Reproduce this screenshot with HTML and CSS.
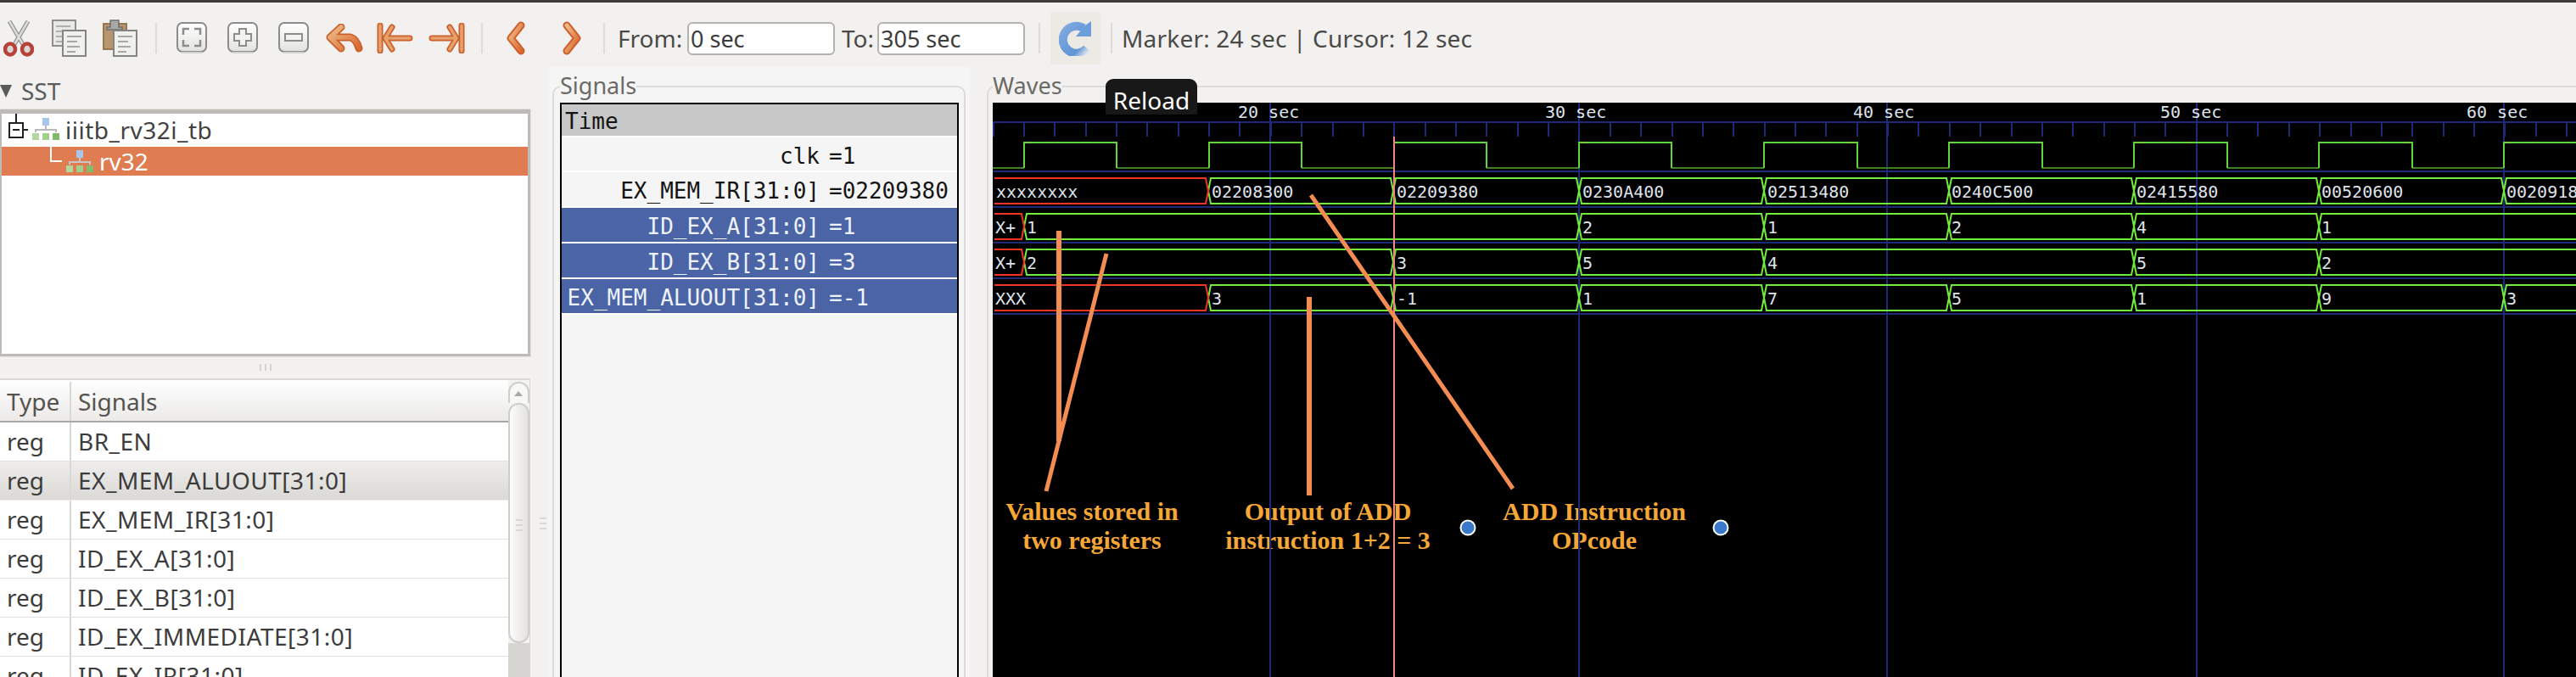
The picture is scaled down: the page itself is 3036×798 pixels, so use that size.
FILE: index.html
```html
<!DOCTYPE html>
<html lang="en">
<head>
<meta charset="utf-8">
<title>GTKWave</title>
<link rel="stylesheet" href="styles.css">
</head>
<body>
<svg class="defs" width="0" height="0" aria-hidden="true">
  <defs>
    <linearGradient id="orange" x1="0" y1="0" x2="1" y2="1">
      <stop offset="0" stop-color="#f0bd8c"/><stop offset="1" stop-color="#d9682e"/>
    </linearGradient>
    <linearGradient id="btn" x1="0" y1="0" x2="0" y2="1">
      <stop offset="0" stop-color="#ffffff"/><stop offset="1" stop-color="#e2e2e0"/>
    </linearGradient>
    <linearGradient id="blueFade" x1="0" y1="0" x2="1" y2="1">
      <stop offset="0" stop-color="#7fa9de"/><stop offset="0.75" stop-color="#5f94d6"/><stop offset="1" stop-color="#dfe6ee"/>
    </linearGradient>
  </defs>
</svg>
<div class="topbar"></div>
<header class="toolbar">
  <div class="tool">
    <svg width="36" height="44" viewBox="0 0 36 44">
      <path d="M7 2L24 31M29 2L12 31" fill="none" stroke="#8f8f8d" stroke-width="5"/>
      <path d="M7 2L24 31M29 2L12 31" fill="none" stroke="#dcdcda" stroke-width="2.5"/>
      <ellipse cx="8" cy="35" rx="6" ry="6.5" fill="#d9d7d3" stroke="#b8423a" stroke-width="4.5"/>
      <ellipse cx="28" cy="35" rx="6" ry="6.5" fill="#d9d7d3" stroke="#b8423a" stroke-width="4.5"/>
    </svg>
  </div>
  <div class="tool">
    <svg width="42" height="44" viewBox="0 0 42 44">
      <rect x="1" y="1" width="27" height="30" fill="#e8e8e6" stroke="#8f8f8d" stroke-width="2"/>
      <path d="M5 8H22M5 14H18M5 20H20M5 26H16" stroke="#b0b0ae" stroke-width="2"/>
      <rect x="13" y="13" width="27" height="30" fill="#f0f0ee" stroke="#858583" stroke-width="2"/>
      <path d="M18 20H35M18 26H30M18 32H33M18 38H28" stroke="#a8a8a6" stroke-width="2"/>
    </svg>
  </div>
  <div class="tool">
    <svg width="42" height="44" viewBox="0 0 42 44">
      <rect x="1" y="5" width="27" height="30" fill="#b7966d" stroke="#94784f" stroke-width="2"/>
      <path d="M9 9V1H19V9H23V12H5V9Z" fill="#a8a8a6" stroke="#6e6e6c" stroke-width="1.5"/>
      <rect x="13" y="13" width="27" height="30" fill="#f0f0ee" stroke="#858583" stroke-width="2"/>
      <path d="M18 20H35M18 26H30M18 32H33M18 38H28" stroke="#a8a8a6" stroke-width="2"/>
    </svg>
  </div>
  <span class="sep sep-first"></span>
  <div class="tool">
    <svg width="36" height="38" viewBox="0 0 36 38">
      <rect x="1" y="1" width="34" height="34" rx="6" fill="url(#btn)" stroke="#8c8c8a" stroke-width="2"/>
      <path d="M6 36H30" stroke="#d2d1cf" stroke-width="2"/>
      <path d="M8 15V8H15M21 8H28V15M8 21V28H15M21 28H28V21" fill="none" stroke="#8c8c8a" stroke-width="2.5"/>
    </svg>
  </div>
  <div class="tool">
    <svg width="36" height="38" viewBox="0 0 36 38">
      <rect x="1" y="1" width="34" height="34" rx="6" fill="url(#btn)" stroke="#8c8c8a" stroke-width="2"/>
      <path d="M6 36H30" stroke="#d2d1cf" stroke-width="2"/>
      <path d="M14 8H22V14H28V22H22V28H14V22H8V14H14Z" fill="#f2f2f0" stroke="#8c8c8a" stroke-width="2"/>
    </svg>
  </div>
  <div class="tool">
    <svg width="36" height="38" viewBox="0 0 36 38">
      <rect x="1" y="1" width="34" height="34" rx="6" fill="url(#btn)" stroke="#8c8c8a" stroke-width="2"/>
      <path d="M6 36H30" stroke="#d2d1cf" stroke-width="2"/>
      <rect x="8" y="14" width="20" height="8" fill="#f2f2f0" stroke="#8c8c8a" stroke-width="2"/>
    </svg>
  </div>
  <div class="tool">
    <svg width="44" height="34" viewBox="0 0 44 34">
      <g fill="none" stroke-linecap="round" stroke-linejoin="round">
        <path d="M18 4L5 16L18 29M5 16H29Q36 18 39 29" stroke="#c9602c" stroke-width="9"/>
        <path d="M18 4L5 16L18 29M5 16H29Q36 18 39 29" stroke="url(#orange)" stroke-width="5.5"/>
      </g>
    </svg>
  </div>
  <div class="tool">
    <svg width="44" height="36" viewBox="0 0 44 36">
      <g fill="none" stroke-linecap="round" stroke-linejoin="round">
        <path d="M4 3V33M18 5L10 18L18 31M10 18H39" stroke="#c9602c" stroke-width="7"/>
        <path d="M4 3V33M18 5L10 18L18 31M10 18H39" stroke="#e8a06a" stroke-width="3.5"/>
      </g>
    </svg>
  </div>
  <div class="tool">
    <svg width="44" height="36" viewBox="0 0 44 36">
      <g fill="none" stroke-linecap="round" stroke-linejoin="round">
        <path d="M40 3V33M26 5L34 18L26 31M34 18H5" stroke="#c9602c" stroke-width="7"/>
        <path d="M40 3V33M26 5L34 18L26 31M34 18H5" stroke="#e8a06a" stroke-width="3.5"/>
      </g>
    </svg>
  </div>
  <span class="sep sep-mid"></span>
  <div class="tool">
    <svg width="24" height="40" viewBox="0 0 24 40">
      <g fill="none" stroke-linecap="round" stroke-linejoin="round">
        <path d="M18 5L6 20L18 35" stroke="#cf5f28" stroke-width="9"/>
        <path d="M18 5L6 20L18 35" stroke="url(#orange)" stroke-width="5"/>
      </g>
    </svg>
  </div>
  <div class="tool tool-next">
    <svg width="24" height="40" viewBox="0 0 24 40">
      <g fill="none" stroke-linecap="round" stroke-linejoin="round">
        <path d="M6 5L18 20L6 35" stroke="#cf5f28" stroke-width="9"/>
        <path d="M6 5L18 20L6 35" stroke="url(#orange)" stroke-width="5"/>
      </g>
    </svg>
  </div>
  <span class="sep sep-range"></span>
  <label class="range-label from-label">From:</label>
  <input class="range-input" type="text" value="0 sec">
  <label class="range-label to-label">To:</label>
  <input class="range-input" type="text" value="305 sec">
  <span class="sep sep-reload"></span>
  <div class="reload-btn">
    <svg width="40" height="42" viewBox="0 0 40 42">
      <path d="M29 9A16 16 0 1 0 33 33" fill="none" stroke="url(#blueFade)" stroke-width="10"/>
      <path d="M38 1V19H20L25 13L31 6Z" fill="#6c9edb"/>
    </svg>
  </div>
  <span class="sep sep-marker"></span>
  <span class="marker-text">Marker: 24 sec | Cursor: 12 sec</span>
</header>

<main class="main">
  <section class="left">
    <div class="left-pane">
      <div class="sst-head"><span class="sst-arrow"></span><span class="sst-title">SST</span></div>
      <div class="tree">
        <div class="tree-row tree-root">
          <svg class="expander" width="24" height="32" viewBox="0 0 24 32">
            <path d="M9 0V11M17 19H23" stroke="#222" stroke-width="2" fill="none"/>
            <rect x="1" y="11" width="16" height="17" fill="#fff" stroke="#222" stroke-width="2"/>
            <path d="M5 19H13" stroke="#222" stroke-width="2"/>
          </svg>
          <svg class="hier" width="32" height="26" viewBox="0 0 32 26">
            <rect x="12" y="0" width="8" height="9" fill="#a8c6ea"/>
            <path d="M16 9V13M4 17V14H28V17" fill="none" stroke="#b8b8b6" stroke-width="2"/>
            <rect x="0" y="18" width="8" height="8" fill="#b2d89e"/>
            <rect x="12" y="18" width="8" height="8" fill="#a3cf8c"/>
            <rect x="24" y="18" width="8" height="8" fill="#82bb6a"/>
          </svg>
          <span class="tree-label">iiitb_rv32i_tb</span>
        </div>
        <div class="tree-row tree-sel">
          <svg class="connector" width="14" height="18" viewBox="0 0 14 18">
            <path d="M1 0V17H14" fill="none" stroke="#fff" stroke-width="2"/>
          </svg>
          <svg class="hier" width="32" height="26" viewBox="0 0 32 26">
            <rect x="12" y="0" width="8" height="9" fill="#a8c6ea"/>
            <path d="M16 9V13M4 17V14H28V17" fill="none" stroke="#c8c8c6" stroke-width="2"/>
            <rect x="0" y="18" width="8" height="8" fill="#b2d89e"/>
            <rect x="12" y="18" width="8" height="8" fill="#a3cf8c"/>
            <rect x="24" y="18" width="8" height="8" fill="#82bb6a"/>
          </svg>
          <span class="tree-label">rv32</span>
        </div>
      </div>
      <div class="hsplit"><span class="hgrip"></span><span class="hgrip"></span><span class="hgrip"></span></div>
      <div class="siglist">
        <div class="siglist-body">
          <div class="sl-head"><span class="sl-type">Type</span><span class="sl-name">Signals</span></div>
          <div class="sl-row"><span class="sl-type">reg</span><span class="sl-name">BR_EN</span></div>
          <div class="sl-row sl-sel"><span class="sl-type">reg</span><span class="sl-name">EX_MEM_ALUOUT[31:0]</span></div>
          <div class="sl-row"><span class="sl-type">reg</span><span class="sl-name">EX_MEM_IR[31:0]</span></div>
          <div class="sl-row"><span class="sl-type">reg</span><span class="sl-name">ID_EX_A[31:0]</span></div>
          <div class="sl-row"><span class="sl-type">reg</span><span class="sl-name">ID_EX_B[31:0]</span></div>
          <div class="sl-row"><span class="sl-type">reg</span><span class="sl-name">ID_EX_IMMEDIATE[31:0]</span></div>
          <div class="sl-row"><span class="sl-type">reg</span><span class="sl-name">ID_EX_IR[31:0]</span></div>
        </div>
        <div class="scrollbar">
          <div class="sb-up"></div>
          <div class="sb-thumb"><span class="grip-h"></span><span class="grip-h"></span><span class="grip-h"></span></div>
          <div class="sb-trough"></div>
        </div>
      </div>
    </div>
    <div class="vsplit"><span class="grip-h"></span><span class="grip-h"></span><span class="grip-h"></span></div>
  </section>

  <section class="signals-panel">
    <fieldset class="frame signals-frame">
      <legend class="frame-title">Signals</legend>
      <div class="sigbox">
        <div class="sig-row sig-time"><span class="time-label">Time</span></div>
        <div class="sig-row sig-short"><span class="sig-name">clk</span><span class="sig-val">=1</span></div>
        <div class="sig-row"><span class="sig-name">EX_MEM_IR[31:0]</span><span class="sig-val">=02209380</span></div>
        <div class="sig-row sig-sel"><span class="sig-name">ID_EX_A[31:0]</span><span class="sig-val">=1</span></div>
        <div class="sig-row sig-sel"><span class="sig-name">ID_EX_B[31:0]</span><span class="sig-val">=3</span></div>
        <div class="sig-row sig-sel"><span class="sig-name">EX_MEM_ALUOUT[31:0]</span><span class="sig-val">=-1</span></div>
      </div>
    </fieldset>
  </section>

  <section class="waves-panel">
    <fieldset class="frame waves-frame">
      <legend class="frame-title">Waves</legend>
      <svg class="wave-canvas" width="1866" height="677" viewBox="1170 121 1866 677">
        <defs>
          <path id="s1424" d="M1424 225L1427 210H1639L1642 225L1639 240H1427Z"/>
          <path id="s1642" d="M1642 225L1645 210H1858L1861 225L1858 240H1645Z"/>
          <path id="s1861" d="M1861 225L1864 210H2076L2079 225L2076 240H1864Z"/>
          <path id="s2079" d="M2079 225L2082 210H2294L2297 225L2294 240H2082Z"/>
          <path id="s2297" d="M2297 225L2300 210H2512L2515 225L2512 240H2300Z"/>
          <path id="s2515" d="M2515 225L2518 210H2730L2733 225L2730 240H2518Z"/>
          <path id="s2733" d="M2733 225L2736 210H2948L2951 225L2948 240H2736Z"/>
          <path id="e2733" d="M2733 225L2736 210H3040M2733 225L2736 240H3040"/>
          <path id="e2951" d="M2951 225L2954 210H3040M2951 225L2954 240H3040"/>
          <path id="l1207a" d="M1207 225L1210 210H1858L1861 225L1858 240H1210Z"/>
          <path id="l1207b" d="M1207 225L1210 210H1639L1642 225L1639 240H1210Z"/>
          <path id="l2079" d="M2079 225L2082 210H2512L2515 225L2512 240H2082Z"/>
          <path id="r1424" d="M1172 210H1421L1424 225L1421 240H1172"/>
          <path id="r1207" d="M1172 210H1204L1207 225L1204 240H1172"/>
        </defs>

        <g class="note-text">
          <text x="1287" y="613">Values stored in</text>
          <text x="1287" y="647">two registers</text>
          <text x="1565" y="613">Output of ADD</text>
          <text x="1565" y="647">instruction 1+2 = 3</text>
          <text x="1879" y="613">ADD Instruction</text>
          <text x="1879" y="647">OPcode</text>
        </g>

        <g class="grid">
          <path d="M1170 144H3036M1170 202H3036M1170 244H3036M1170 286H3036M1170 328H3036M1170 370H3036"/>
          <path d="M1497 121V798M1861 121V798M2224 121V798M2589 121V798M2951 121V798"/>
          <path d="M1171 144V161M1207 144V161M1243 144V161M1280 144V161M1316 144V161M1352 144V161M1389 144V161M1425 144V161M1461 144V161M1498 144V161M1534 144V161M1571 144V161M1607 144V161M1643 144V161M1680 144V161M1716 144V161M1752 144V161M1789 144V161M1825 144V161M1861 144V161M1898 144V161M1934 144V161M1971 144V161M2007 144V161M2043 144V161M2080 144V161M2116 144V161M2152 144V161M2189 144V161M2225 144V161M2261 144V161M2298 144V161M2334 144V161M2371 144V161M2407 144V161M2443 144V161M2480 144V161M2516 144V161M2552 144V161M2589 144V161M2625 144V161M2661 144V161M2698 144V161M2734 144V161M2771 144V161M2807 144V161M2843 144V161M2880 144V161M2916 144V161M2952 144V161M2989 144V161M3025 144V161"/>
        </g>

        <g class="wave-text">
          <text x="1459" y="139">20 sec</text>
          <text x="1821" y="139">30 sec</text>
          <text x="2184" y="139">40 sec</text>
          <text x="2546" y="139">50 sec</text>
          <text x="2907" y="139">60 sec</text>
        </g>

        <path class="clk-low" d="M1170 198H1207M1316 198H1425M1534 198H1643M1752 198H1861M1970 198H2079M2189 198H2297M2407 198H2515M2625 198H2733M2843 198H2951"/>
        <path class="clk-high" d="M1207 198V168H1316V198M1425 198V168H1534V198M1643 198V168H1752V198M1861 198V168H1970V198M2079 198V168H2189V198M2297 198V168H2407V198M2515 198V168H2625V198M2733 198V168H2843V198M2951 198V168H3040"/>

        <g class="bus">
          <use href="#s1424"/><use href="#s1642"/><use href="#s1861"/><use href="#s2079"/><use href="#s2297"/><use href="#s2515"/><use href="#s2733"/><use href="#e2951"/>
        </g>
        <use class="bus-x" href="#r1424"/>
        <g class="bus row-a">
          <use href="#l1207a"/><use href="#s1861"/><use href="#s2079"/><use href="#s2297"/><use href="#s2515"/><use href="#e2733"/>
        </g>
        <use class="bus-x row-a" href="#r1207"/>
        <g class="bus row-b">
          <use href="#l1207b"/><use href="#s1642"/><use href="#s1861"/><use href="#l2079"/><use href="#s2515"/><use href="#e2733"/>
        </g>
        <use class="bus-x row-b" href="#r1207"/>
        <g class="bus row-c">
          <use href="#s1424"/><use href="#s1642"/><use href="#s1861"/><use href="#s2079"/><use href="#s2297"/><use href="#s2515"/><use href="#s2733"/><use href="#e2951"/>
        </g>
        <use class="bus-x row-c" href="#r1424"/>

        <g class="wave-text">
          <text x="1174" y="233">xxxxxxxx</text>
          <text x="1428" y="233">02208300</text>
          <text x="1646" y="233">02209380</text>
          <text x="1865" y="233">0230A400</text>
          <text x="2083" y="233">02513480</text>
          <text x="2300" y="233">0240C500</text>
          <text x="2518" y="233">02415580</text>
          <text x="2736" y="233">00520600</text>
          <text x="2954" y="233">00209180</text>

          <text x="1173" y="275">X+</text>
          <text x="1210" y="275">1</text>
          <text x="1865" y="275">2</text>
          <text x="2083" y="275">1</text>
          <text x="2300" y="275">2</text>
          <text x="2518" y="275">4</text>
          <text x="2736" y="275">1</text>

          <text x="1173" y="317">X+</text>
          <text x="1210" y="317">2</text>
          <text x="1646" y="317">3</text>
          <text x="1865" y="317">5</text>
          <text x="2083" y="317">4</text>
          <text x="2518" y="317">5</text>
          <text x="2736" y="317">2</text>

          <text x="1173" y="359">XXX</text>
          <text x="1428" y="359">3</text>
          <text x="1646" y="359">-1</text>
          <text x="1865" y="359">1</text>
          <text x="2083" y="359">7</text>
          <text x="2300" y="359">5</text>
          <text x="2518" y="359">1</text>
          <text x="2736" y="359">9</text>
          <text x="2954" y="359">3</text>
        </g>

        <path class="cursor" d="M1643 161V798"/>

        <g class="arrows">
          <path d="M1248 272V520"/>
          <path class="thin" d="M1304 299L1233 579"/>
          <path d="M1543 350V584"/>
          <path class="thin" d="M1545 230L1783 576"/>
        </g>

        <circle class="dot" cx="1730" cy="622" r="8.5"/>
        <circle class="dot" cx="2028" cy="622" r="8.5"/>
      </svg>
    </fieldset>
    <div class="tooltip">Reload</div>
  </section>
</main>
</body>
</html>
```
FILE: styles.css
```css
* { box-sizing: border-box; }

html, body {
  margin: 0;
  padding: 0;
}

body {
  width: 3036px;
  height: 798px;
  overflow: hidden;
  background: #f2f1ef;
  font-family: "Noto Sans", "Liberation Sans", sans-serif;
  font-size: 28px;
  color: #3c3c3c;
}

.defs { position: absolute; }

.topbar { height: 3px; background: #3c3b37; }

/* toolbar */
.toolbar {
  display: flex;
  align-items: center;
  height: 76px;
  padding-top: 8px;
  margin-left: -8px;
}
.tool {
  flex: none;
  width: 60px;
  display: flex;
  align-items: center;
  justify-content: center;
}
.tool svg, .reload-btn svg { display: block; }
.tool-next { margin-left: 6px; }

.sep {
  flex: none;
  width: 2px;
  height: 36px;
  background: #dddcd9;
}
.sep-first { margin: 0 11px; }
.sep-mid { margin: 0 9px 0 11px; }
.sep-range { margin-left: 7px; }
.sep-reload { margin-left: 16px; }
.sep-marker { margin-left: 12px; }

.range-label { flex: none; color: #4a4a48; font-size: 28px; }
.from-label { width: 82px; margin-left: 15px; }
.to-label { width: 42px; margin-left: 8px; }

.range-input {
  flex: none;
  width: 174px;
  height: 39px;
  padding: 0 2px;
  border: 2px solid #b4b2ac;
  border-radius: 6px;
  background: #fff;
  font-family: inherit;
  font-size: 27px;
  color: #3c3c3c;
  outline: none;
}

.reload-btn {
  flex: none;
  width: 59px;
  height: 62px;
  margin-left: 12px;
  background: #edeae6;
  display: flex;
  align-items: center;
  justify-content: center;
}

.marker-text {
  margin-left: 11px;
  font-size: 28px;
  letter-spacing: 0.2px;
  color: #4a4a48;
  white-space: nowrap;
}

/* main columns */
.main {
  display: flex;
  height: 719px;
}

.left {
  flex: none;
  width: 646px;
  display: flex;
}
.left-pane {
  flex: none;
  width: 625px;
  display: flex;
  flex-direction: column;
}
.vsplit {
  flex: none;
  width: 21px;
  padding: 531px 0 0 11px;
}
.grip-h {
  display: block;
  width: 8px;
  height: 2px;
  margin-bottom: 4px;
  background: #d9d8d5;
}

.sst-head {
  height: 50px;
  display: flex;
  align-items: center;
  padding-top: 6px;
}
.sst-arrow {
  width: 0;
  height: 0;
  margin-right: 11px;
  border-left: 7px solid transparent;
  border-right: 7px solid transparent;
  border-top: 15px solid #5a5a58;
}
.sst-title { color: #5a5b5e; font-size: 28px; }

.tree {
  height: 291px;
  background: #fff;
  border: 3px solid #bcbbb6;
  border-top-width: 5px;
  border-left-width: 2px;
  outline: 1px solid #e2e1de;
}
.tree-row {
  display: flex;
  align-items: center;
  position: relative;
}
.tree-root {
  height: 39px;
  padding-left: 8px;
  align-items: flex-start;
}
.tree-root .expander { display: block; flex: none; margin-right: 4px; }
.tree-root .hier { margin-top: 5px; }
.tree-root .tree-label { line-height: 38px; margin-top: 0; letter-spacing: 0.5px; }
.hier { display: block; flex: none; margin-right: 7px; }
.tree-label { font-size: 28px; color: #43413f; }

.tree-sel {
  height: 34px;
  padding-left: 57px;
  background: #e07c52;
}
.tree-sel .tree-label { color: #fff; }
.tree-sel .connector { display: block; flex: none; margin: -16px 5px 0 0; }

.hsplit {
  height: 26px;
  display: flex;
  justify-content: center;
  align-items: center;
  gap: 4px;
  padding-left: 0;
}
.hgrip { width: 2px; height: 8px; background: #d3d2cf; }

.siglist {
  flex: 1;
  min-height: 0;
  display: flex;
  overflow: hidden;
  background: #fff;
  border-top: 2px solid #d9d8d5;
  border-right: 1px solid #d9d8d5;
}
.siglist-body {
  flex: 1;
  min-width: 0;
  overflow: hidden;
}
.sl-head {
  display: flex;
  height: 50px;
  padding-top: 2px;
  align-items: stretch;
  background: linear-gradient(#ffffff, #ebeae8);
  border-bottom: 2px solid #a9a7a3;
  line-height: 46px;
  color: #55534f;
}
.sl-row {
  display: flex;
  height: 46px;
  line-height: 44px;
  border-bottom: 1px solid #e2e1df;
}
.sl-row:first-of-type { border-bottom: 2px solid #dedddb; }
.sl-sel {
  background: linear-gradient(#eeedeb, #dad9d6);
  border-bottom-color: transparent;
}
.sl-type {
  flex: none;
  width: 84px;
  padding-left: 8px;
  border-right: 2px solid #d9d8d5;
}
.sl-name {
  flex: 1;
  padding-left: 8px;
  white-space: nowrap;
}
.sl-row .sl-name { letter-spacing: 0.5px; }

.scrollbar {
  flex: none;
  width: 25px;
  display: flex;
  flex-direction: column;
  background: #f4f3f2;
}
.sb-up {
  height: 25px;
  margin-top: 2px;
  background: #f7f7f6;
  border: 2px solid #cfcecb;
  border-bottom: none;
  border-radius: 12px 12px 0 0;
  position: relative;
}
.sb-up::after {
  content: "";
  position: absolute;
  left: 5px;
  top: 9px;
  border-left: 5px solid transparent;
  border-right: 5px solid transparent;
  border-bottom: 6px solid #a8a7a4;
}
.sb-thumb {
  height: 283px;
  padding: 135px 0 0 7px;
  background: linear-gradient(90deg, #fbfbfa, #e4e3e1);
  border: 2px solid #cfcecb;
  border-radius: 12px;
}
.sb-trough { flex: 1; background: #d6d5d2; }

/* frames */
.signals-panel {
  flex: none;
  width: 497px;
  background: #f5f5f5;
}
.waves-panel {
  flex: 1;
  min-width: 0;
  position: relative;
  overflow: hidden;
}
.frame {
  margin: 8px 0 0;
  height: 711px;
  border: 2px solid #dcdbd9;
  border-bottom: none;
  border-radius: 10px 10px 0 0;
}
.frame-title {
  padding: 0;
  height: 30px;
  line-height: 28px;
  font-size: 27px;
  color: #6b6a67;
}
.signals-frame {
  margin-left: 5px;
  width: 487px;
  padding: 4px 0 0 7px;
}
.waves-frame {
  margin-left: 20px;
  width: 1910px;
  padding: 4px 0 0 5px;
  min-width: 0;
}

/* signal names */
.sigbox {
  width: 470px;
  height: 680px;
  border: 2px solid #000;
  background: #f5f5f5;
  font-family: "DejaVu Sans Mono", monospace;
  font-size: 26px;
  color: #141414;
}
.sig-row {
  display: flex;
  height: 42px;
  line-height: 44px;
  border-bottom: 2px solid #fff;
  white-space: pre;
}
.sig-short { height: 41px; }
.sig-time {
  height: 39px;
  line-height: 40px;
  background: linear-gradient(#c8c8c8, #c8c8c8) no-repeat 0 0 / 100% 37px;
  padding-left: 4px;
}
.sig-name {
  flex: none;
  width: 304px;
  text-align: right;
}
.sig-val { margin-left: 11px; }
.sig-sel {
  background: #4a64a6;
  color: #eef2fa;
}

/* wave canvas */
.wave-canvas {
  display: block;
  background: #000;
}
.grid path { fill: none; stroke: #1e2a78; stroke-width: 2; }
.wave-text text {
  font-family: "DejaVu Sans Mono", monospace;
  font-size: 20px;
  fill: #dfe3ea;
}
.clk-low { fill: none; stroke: #3d7f22; stroke-width: 2; }
.clk-high { fill: none; stroke: #62d43a; stroke-width: 2; }
.bus { fill: none; stroke: #72ec3c; stroke-width: 2; }
.bus-x { fill: none; stroke: #f23422; stroke-width: 2; }
.row-a { transform: translateY(42px); }
.row-b { transform: translateY(84px); }
.row-c { transform: translateY(126px); }
.cursor { stroke: #f4877c; stroke-width: 2; fill: none; }
.arrows path { stroke: #f58d53; stroke-width: 6; fill: none; }
.arrows .thin { stroke-width: 5; }
.note-text text {
  font-family: "Liberation Serif", serif;
  font-weight: bold;
  font-size: 30px;
  fill: #f5a737;
  text-anchor: middle;
}
.dot { fill: #3a78c9; stroke: #fff; stroke-width: 2; }

.tooltip {
  position: absolute;
  left: 160px;
  top: 14px;
  width: 108px;
  height: 42px;
  padding-top: 10px;
  border-radius: 9px 9px 0 0;
  background: #181818;
  color: #fff;
  font-size: 28px;
  line-height: 30px;
  text-align: center;
}
```
